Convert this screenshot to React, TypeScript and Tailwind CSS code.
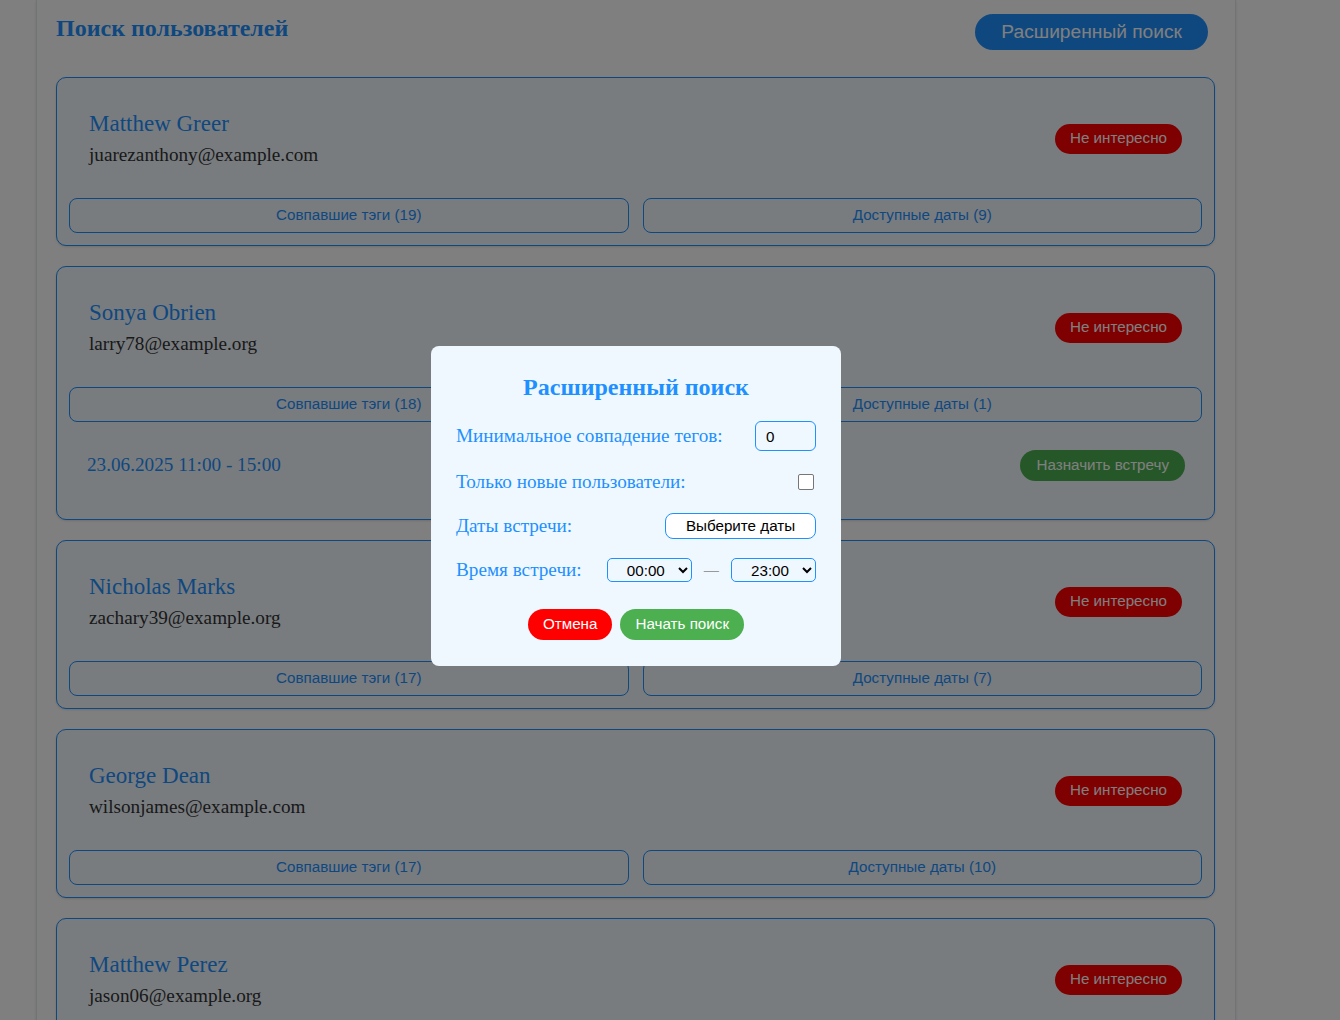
import React from "react";

type User = {
  name: string;
  email: string;
  tags: number;
  dates: number;
  meeting?: string;
};

const users: User[] = [
  { name: "Matthew Greer", email: "juarezanthony@example.com", tags: 19, dates: 9 },
  { name: "Sonya Obrien", email: "larry78@example.org", tags: 18, dates: 1, meeting: "23.06.2025 11:00 - 15:00" },
  { name: "Nicholas Marks", email: "zachary39@example.org", tags: 17, dates: 7 },
  { name: "George Dean", email: "wilsonjames@example.com", tags: 17, dates: 10 },
  { name: "Matthew Perez", email: "jason06@example.org", tags: 16, dates: 4 },
];

const serif = "font-['Liberation_Serif','Times_New_Roman',serif]";
const sans = "font-['Liberation_Sans',Arial,sans-serif]";

const UserCard: React.FC<{ user: User }> = ({ user }) => (
  <div className="rounded-[10px] border border-[#1e90ff] bg-[#f0f8ff] p-3 shadow-sm">
    {/* name + action */}
    <div className="flex items-center justify-between p-5">
      <div className={serif}>
        <div className="mb-[5px] text-[23px] leading-[28px] text-[#1e90ff]">{user.name}</div>
        <div className="text-[19.2px] leading-[24px] text-[#333]">{user.email}</div>
      </div>
      <button className={`${sans} h-[30px] rounded-full bg-[#ff0000] px-[15px] text-[15.2px] text-white`}>
        Не интересно
      </button>
    </div>

    <div className="mt-[11px] grid grid-cols-2 gap-[14px]">
      <button className={`${sans} h-[35px] rounded-lg border border-[#1e90ff] text-[15.2px] text-[#1e90ff]`}>
        Совпавшие тэги ({user.tags})
      </button>
      <button className={`${sans} h-[35px] rounded-lg border border-[#1e90ff] text-[15.2px] text-[#1e90ff]`}>
        Доступные даты ({user.dates})
      </button>
    </div>

    {user.meeting && (
      <div className="flex h-[85px] items-center justify-between pl-[18px] pr-[17px] pt-[1px]">
        <span className={`${serif} text-[19.2px] text-[#1e90ff]`}>{user.meeting}</span>
        <button className={`${sans} h-[31px] rounded-full bg-[#4caf50] px-[16px] text-[15.2px] text-white`}>
          Назначить встречу
        </button>
      </div>
    )}
  </div>
);

const SearchModal: React.FC = () => (
  <div className="w-[410px] rounded-lg bg-[#f0f8ff] px-[25px] pb-[26px] pt-[27px]">
    <h2 className={`${serif} text-center text-[24px] font-bold leading-[28px] text-[#1e90ff]`}>
      Расширенный поиск
    </h2>

    <div className={`${serif} mt-5 flex flex-col gap-[19px] text-[19.2px] leading-[22px] text-[#1e90ff]`}>
      <div className="flex items-center justify-between">
        <label>Минимальное совпадение тегов:</label>
        <input
          defaultValue="0"
          className={`${sans} h-[30px] w-[61px] rounded-md border border-[#1e90ff] px-[10px] text-[15.2px] text-black outline-none`}
        />
      </div>

      <div className="flex h-[24px] items-center justify-between">
        <label>Только новые пользователи:</label>
        <input
          type="checkbox"
          className="mr-[2px] h-4 w-4 appearance-none rounded-[2px] border border-[#767676] bg-white"
        />
      </div>

      <div className="flex items-center justify-between">
        <label>Даты встречи:</label>
        <button className={`${sans} h-[26px] w-[151px] rounded-lg border border-[#1e90ff] bg-white text-[15.2px] text-black`}>
          Выберите даты
        </button>
      </div>

      <div className="flex items-center justify-between">
        <label>Время встречи:</label>
        <div className={`${sans} flex items-center gap-3 text-[15.2px] text-black`}>
          <select defaultValue="00:00" className="h-6 w-[85px] rounded-[5px] border border-[#1e90ff] pl-[15px]">
            <option>00:00</option>
          </select>
          <span className="text-[#999]">—</span>
          <select defaultValue="23:00" className="h-6 w-[85px] rounded-[5px] border border-[#1e90ff] pl-[15px]">
            <option>23:00</option>
          </select>
        </div>
      </div>
    </div>

    <div className={`${sans} mt-[27px] flex justify-center gap-2 text-[15.2px] text-white`}>
      <button className="h-[31px] rounded-full bg-[#ff0000] px-[15px]">Отмена</button>
      <button className="h-[31px] rounded-full bg-[#4caf50] px-[15px]">Начать поиск</button>
    </div>
  </div>
);

export default function App() {
  return (
    <div className="min-h-screen bg-white">
      <div className="ml-[36px] w-[1200px] border-x border-gray-200 bg-white pb-10 pl-[19px] pr-[20px] pt-[14px] shadow-sm">
        <div className="flex items-start justify-between">
          <h1 className={`${serif} text-[24px] font-bold leading-7 text-[#1e90ff]`}>Поиск пользователей</h1>
          <button className={`${sans} mr-[7px] h-9 rounded-full bg-[#1e90ff] px-[26px] text-[19.2px] text-white`}>
            Расширенный поиск
          </button>
        </div>

        <div className="mt-[27px] flex flex-col gap-5">
          {users.map((u) => (
            <UserCard key={u.email} user={u} />
          ))}
        </div>
      </div>

      {/* modal overlay */}
      <div className="fixed inset-0 bg-black/50">
        <div className="ml-[36px] flex h-full w-[1200px] items-center justify-center pb-2">
          <SearchModal />
        </div>
      </div>
    </div>
  );
}
